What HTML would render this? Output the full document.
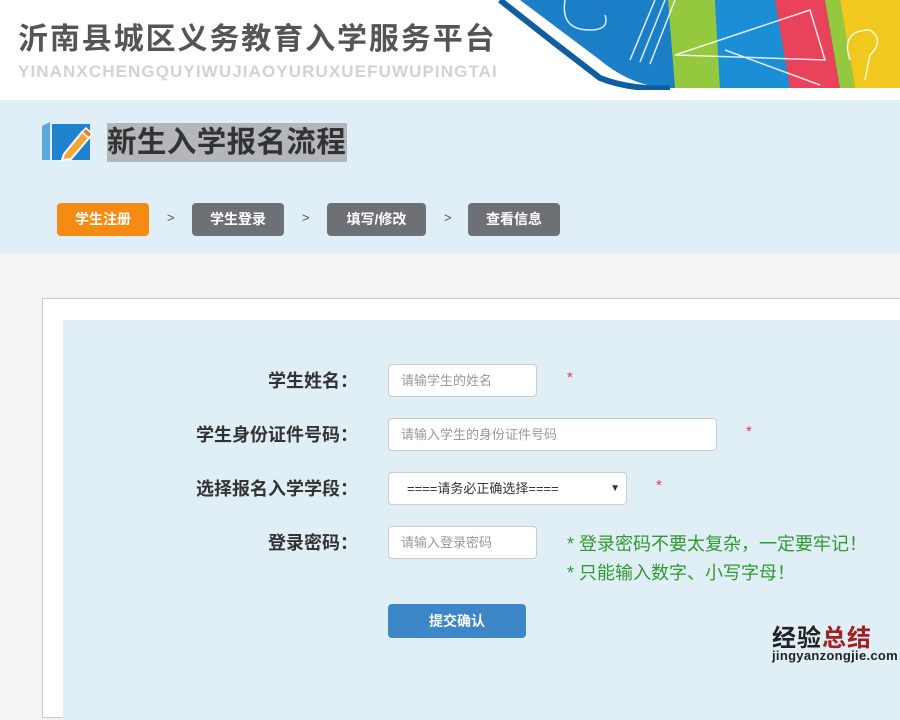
<!DOCTYPE html>
<html><head><meta charset="utf-8"><style>
*{margin:0;padding:0;box-sizing:border-box}
body{width:900px;height:671px;overflow:hidden;background:#f4f4f4;font-family:"Liberation Sans","Noto Sans CJK SC",sans-serif;position:relative}
.abs{position:absolute}
.hdr{left:0;top:0;width:900px;height:100px;background:#fff}
.t1{left:18px;top:14px;font-size:30px;font-weight:bold;color:#555;letter-spacing:1.9px;white-space:nowrap}
.t2{left:18px;top:62px;font-size:17px;font-weight:bold;color:#d2d2d2;letter-spacing:1.1px;white-space:nowrap}
.band{left:0;top:100px;width:900px;height:153px;background:#dfeef7}
.ttl{left:107px;top:123px;width:240px;height:39px;background:#b3b7bb;font-size:29.5px;font-weight:bold;color:#333;line-height:39px;white-space:nowrap;letter-spacing:0.4px}
.st{top:203px;height:33px;border-radius:4px;color:#fff;font-size:14px;font-weight:bold;text-align:center;line-height:33px}
.gt{top:210px;font-size:13px;color:#555}
.box{left:42px;top:298px;width:870px;height:420px;background:#fff;border:1px solid #ccc}
.pan{left:63px;top:320px;width:850px;height:400px;background:#e0eef6}
.lb{width:303px;left:55px;text-align:right;font-size:18px;font-weight:bold;color:#333;white-space:nowrap}
.in{left:388px;height:33px;background:#fff;border:1px solid #ccc;border-radius:4px;font-size:13px;color:#999;line-height:31px;padding-left:12px}
.rs{color:#e04050;font-size:15px}
.gr{left:567px;font-size:18px;color:#2f9a2f;white-space:nowrap}
</style></head><body>
<div class="abs hdr"></div>
<svg class="abs" style="left:480px;top:0" width="420" height="90">
<path d="M0 0 L420 0 L420 88 L185 88 Q150 85 120 60 L40 0Z" fill="#1b7fc8"/>
<path d="M188 0 L235 0 L240 88 L195 88Z" fill="#94c83e"/>
<path d="M235 0 L295 0 L310 88 L240 88Z" fill="#1b8ed6"/>
<path d="M295 0 L345 0 L360 88 L310 88Z" fill="#e8435a"/>
<path d="M345 0 L360 0 L375 88 L360 88Z" fill="#94c83e"/>
<path d="M360 0 L420 0 L420 88 L375 88Z" fill="#f1c81e"/>
<path d="M20 0 Q70 40 120 78 Q150 90 190 88" fill="none" stroke="#0f5fa0" stroke-width="6"/>
<g fill="none" stroke="#fff" stroke-width="1.5" opacity=".85">
<path d="M85 0 Q80 30 110 30 Q130 30 125 15"/>
<path d="M150 60 L175 0 M160 62 L185 0 M170 64 L195 0"/>
<path d="M195 55 L330 10 L345 60 Z"/>
<path d="M245 50 L340 85"/>
<path d="M370 60 Q360 30 390 30 Q405 40 390 55 L385 80"/>
</g>
</svg>
<div class="abs t1">沂南县城区义务教育入学服务平台</div>
<div class="abs t2">YINANXCHENGQUYIWUJIAOYURUXUEFUWUPINGTAI</div>
<div class="abs band"></div>
<svg class="abs" style="left:42px;top:122px" width="50" height="40">
<path d="M0 4 L8 0 L8 38 L0 38Z" fill="#5aa8e0"/>
<path d="M10 2 L48 2 L48 38 L10 38Z" fill="#1e82cf"/>
<path d="M22 32 L40 10 L47 16 L29 37 L20 38Z" fill="#f4a43a" stroke="#fff" stroke-width="2"/>
<path d="M40 10 L44 6 L50 12 L47 16Z" fill="#f07a2a" stroke="#fff" stroke-width="1.5"/>
</svg>
<div class="abs ttl">新生入学报名流程</div>
<div class="abs st" style="left:57px;width:92px;background:#f68b14">学生注册</div>
<div class="abs gt" style="left:167px">&gt;</div>
<div class="abs st" style="left:192px;width:92px;background:#6d7176">学生登录</div>
<div class="abs gt" style="left:302px">&gt;</div>
<div class="abs st" style="left:327px;width:99px;background:#6d7176">填写/修改</div>
<div class="abs gt" style="left:444px">&gt;</div>
<div class="abs st" style="left:468px;width:92px;background:#6d7176">查看信息</div>
<div class="abs box"></div>
<div class="abs pan"></div>
<div class="abs lb" style="top:367px">学生姓名：</div>
<div class="abs lb" style="top:421px">学生身份证件号码：</div>
<div class="abs lb" style="top:475px">选择报名入学学段：</div>
<div class="abs lb" style="top:529px">登录密码：</div>
<div class="abs in" style="top:364px;width:149px">请输学生的姓名</div>
<div class="abs in" style="top:418px;width:329px">请输入学生的身份证件号码</div>
<div class="abs in" style="top:472px;width:239px;color:#333;padding-left:18px">====请务必正确选择====<span style="position:absolute;right:6px;font-size:10px">▼</span></div>
<div class="abs in" style="top:526px;width:149px">请输入登录密码</div>
<div class="abs rs" style="left:567px;top:369px">*</div>
<div class="abs rs" style="left:746px;top:423px">*</div>
<div class="abs rs" style="left:656px;top:477px">*</div>
<div class="abs gr" style="top:530px">* 登录密码不要太复杂，一定要牢记！</div>
<div class="abs gr" style="top:559px">* 只能输入数字、小写字母！</div>
<div class="abs" style="left:388px;top:604px;width:138px;height:34px;background:#3d87c9;border-radius:4px;color:#fff;font-size:14px;font-weight:bold;text-align:center;line-height:34px">提交确认</div>
<div class="abs" style="left:772px;top:618px;font-size:24px;font-weight:bold;color:#222;letter-spacing:1px;white-space:nowrap">经验<span style="color:#a02020">总结</span></div>
<div class="abs" style="left:772px;top:648px;font-size:13px;font-weight:bold;color:#222;white-space:nowrap;letter-spacing:0.3px">jingyanzongjie.com</div>
</body></html>
